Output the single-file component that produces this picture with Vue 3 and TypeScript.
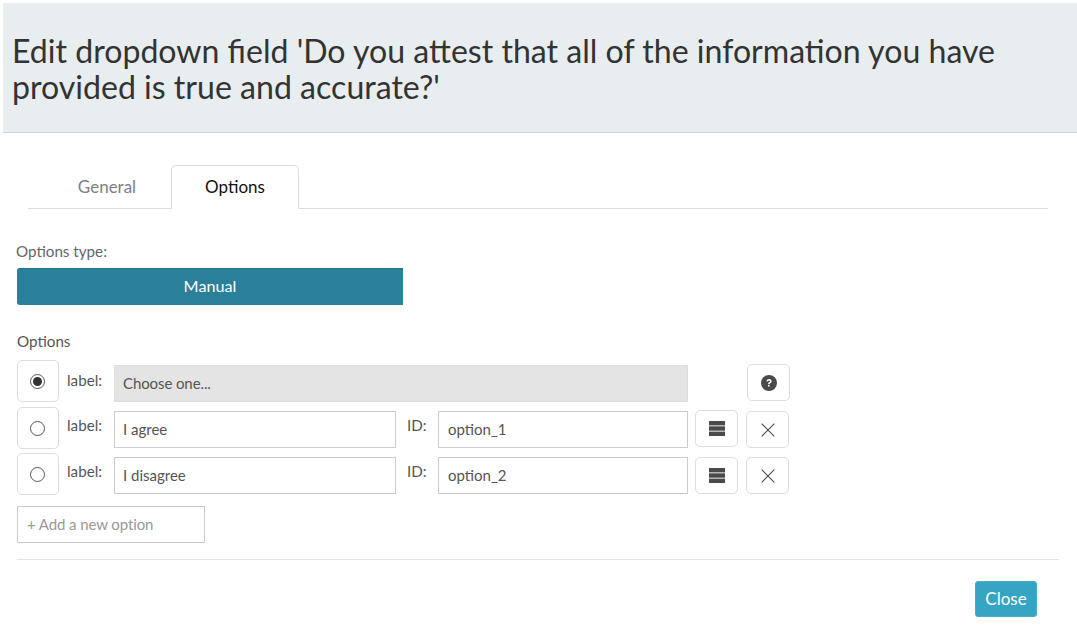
<script setup lang="ts">
interface Opt { label: string; id: string; selected: boolean }
const options: Opt[] = [
  { label: 'I agree', id: 'option_1', selected: false },
  { label: 'I disagree', id: 'option_2', selected: false },
]
</script>

<template>
  <div class="page">
    <header class="head">
      <h1>Edit dropdown field 'Do you attest that all of the information you have provided is true and accurate?'</h1>
    </header>
    <nav class="tabs">
      <span class="tab">General</span>
      <span class="tab active">Options</span>
    </nav>
    <main class="body">
      <div class="type-label">Options type:</div>
      <div class="manual">Manual</div>
      <div class="opts-label">Options</div>

      <div class="row first">
        <span class="radio-box"><span class="radio on"></span></span>
        <span class="lbl">label:</span>
        <span class="input disabled">Choose one...</span>
        <button class="btn help" aria-label="Help">
          <svg width="16" height="16" viewBox="0 0 16 16">
            <circle cx="8" cy="8" r="8" fill="#4a4a4a" />
            <path d="M5.5 6.3C5.6 4.9 6.6 4.1 8 4.1c1.5 0 2.6.9 2.6 2.1 0 1.1-.7 1.6-1.4 2-.5.3-.7.5-.7 1H7.1c0-1 .4-1.5 1.1-1.9.5-.3.8-.5.8-1 0-.5-.4-.8-1-.8s-1 .3-1.1.9z" fill="#fff" />
            <rect x="7.1" y="10" width="1.5" height="1.6" fill="#fff" />
          </svg>
        </button>
      </div>

      <div v-for="o in options" :key="o.id" class="row">
        <span class="radio-box"><span class="radio"></span></span>
        <span class="lbl">label:</span>
        <span class="input label-input">{{ o.label }}</span>
        <span class="lbl id">ID:</span>
        <span class="input id-input">{{ o.id }}</span>
        <button class="btn drag" aria-label="Reorder">
          <svg width="16" height="15" viewBox="0 0 16 15">
            <rect y="0" width="16" height="4.4" fill="#4a4a4a" />
            <rect y="5.3" width="16" height="4.4" fill="#4a4a4a" />
            <rect y="10.6" width="16" height="4.4" fill="#4a4a4a" />
          </svg>
        </button>
        <button class="btn del" aria-label="Remove">
          <svg width="14" height="14" viewBox="0 0 14 14">
            <path d="M.7.7l12.6 12.6M13.3.7L.7 13.3" stroke="#4d4d4d" stroke-width="1.1" fill="none" />
          </svg>
        </button>
      </div>

      <div class="add">+ Add a new option</div>
      <hr class="rule" />
      <div class="foot"><button class="close">Close</button></div>
    </main>
  </div>
</template>

<style>
html, body { background: #fff; }
</style>

<style scoped>
.page {
  width: 1077px;
  height: 639px;
  overflow: hidden;
  font-family: Lato, "Open Sans", sans-serif;
  color: #555;
  font-size: 15px;
  box-sizing: border-box;
  padding-top: 3px;
}
.head {
  margin-left: 3px;
  height: 130px;
  box-sizing: border-box;
  background: #e8edf0;
  border-bottom: 1px solid #cfd4d9;
  padding: 30px 40px 0 9px;
}
h1 {
  margin: 0;
  font-size: 32.1px;
  line-height: 36px;
  font-weight: 400;
  color: #333;
}
.tabs {
  display: flex;
  margin: 32px 29px 0 28px;
  height: 43px;
  border-bottom: 1px solid #ddd;
  box-sizing: content-box;
}
.tab {
  box-sizing: border-box;
  height: 43px;
  line-height: 43px;
  text-align: center;
  font-size: 17px;
  color: #808080;
  width: 143px;
  padding-left: 15px;
}
.tab.active {
  width: 128px;
  padding-left: 0;
  color: #111;
  background: #fff;
  border: 1px solid #ddd;
  border-bottom: 1px solid #fff;
  border-radius: 5px 5px 0 0;
  height: 44px;
  line-height: 42px;
}
.body { padding: 0 18px 0 17px; }
.type-label {
  margin-top: 32px;
  height: 20px;
  line-height: 20px;
  color: #666;
  margin-left: -1px;
  font-size: 15.2px;
}
.manual {
  margin-top: 7px;
  width: 386px;
  height: 37px;
  line-height: 34px;
  text-align: center;
  background: #2a7f99;
  border-top: 1px solid #26738b;
  box-sizing: border-box;
  border-radius: 3px 0 0 3px;
  color: #fff;
  font-size: 16.2px;
}
.opts-label {
  margin-top: 26px;
  height: 20px;
  line-height: 20px;
  color: #555;
  font-size: 15.2px;
}
.row {
  display: flex;
  align-items: flex-start;
  height: 42px;
  margin-top: 4px;
}
.row.first { margin-top: 9px; margin-bottom: 5px; }
.radio-box {
  width: 42px;
  height: 42px;
  box-sizing: border-box;
  border: 1px solid #ddd;
  border-radius: 5px;
  display: flex;
  align-items: center;
  justify-content: center;
  flex: none;
}
.radio {
  width: 15px;
  height: 15px;
  box-sizing: border-box;
  border: 1px solid #555;
  border-radius: 50%;
  display: flex;
  align-items: center;
  justify-content: center;
  margin-left: -1px;
}
.radio.on::after {
  content: "";
  width: 9px;
  height: 9px;
  border-radius: 50%;
  background: #333;
}
.lbl {
  margin-top: 8px;
  margin-left: 8px;
  width: 47px;
  height: 20px;
  line-height: 20px;
  flex: none;
  font-size: 15.2px;
}
.first .lbl { margin-top: 10px; }
.lbl.id { width: 31px; margin-left: 11px; }
.input {
  height: 37px;
  line-height: 34px;
  margin-top: 4px;
  box-sizing: border-box;
  border: 1px solid #ccc;
  padding-left: 8px;
  flex: none;
  color: #555;
  background: #fff;
}
.input.disabled {
  width: 574px;
  background: #e4e4e4;
  border-color: #ddd;
  margin-top: 5px;
  letter-spacing: -0.1px;
}
.label-input { width: 282px; }
.id-input { width: 250px; padding-left: 9px; }
button {
  font-family: inherit;
  padding: 0;
  background: #fff;
  cursor: pointer;
}
.btn {
  box-sizing: border-box;
  border: 1px solid #ddd;
  border-radius: 5px;
  display: flex;
  align-items: center;
  justify-content: center;
  flex: none;
}
.help { width: 43px; height: 37px; margin: 4px 0 0 59px; }
.drag { width: 43px; height: 37px; margin: 3px 0 0 7px; }
.row + .row + .row .drag { margin-top: 4px; }
.del { width: 43px; height: 37px; margin: 4px 0 0 8px; }
.add {
  margin-top: 11px;
  width: 188px;
  height: 37px;
  line-height: 35px;
  box-sizing: border-box;
  border: 1px solid #ccc;
  padding-left: 9px;
  color: #999;
  letter-spacing: -0.1px;
}
.rule {
  margin: 16px 0 0 0;
  border: 0;
  border-top: 1px solid #e5e5e5;
}
.foot {
  display: flex;
  justify-content: flex-end;
  padding: 21px 22px 0 0;
}
.close {
  width: 62px;
  height: 36px;
  line-height: 32px;
  border: 1px solid #49adc7;
  border-radius: 3px;
  background: #35a5c3;
  color: #fff;
  font-size: 17px;
}
</style>
